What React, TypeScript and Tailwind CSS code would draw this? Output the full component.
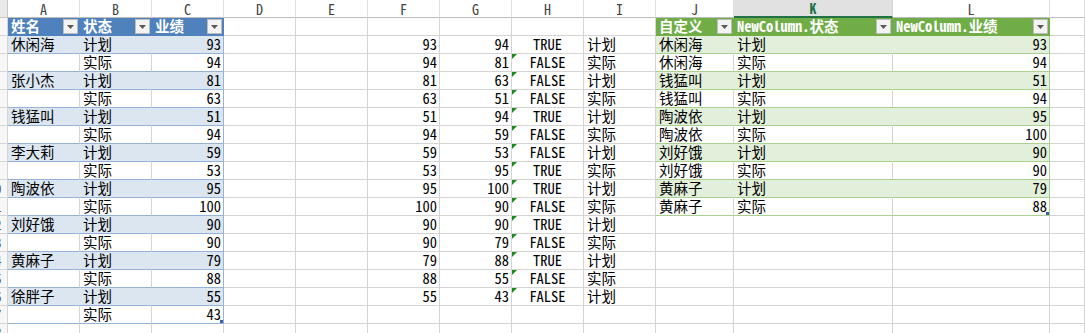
import React from 'react';
import clsx from 'clsx';

const FONT = "font-['Noto_Sans_Mono_CJK_SC','Noto_Sans_CJK_SC',monospace]";
const GRID = 'grid grid-cols-[8px_repeat(9,72px)_78px_159px_157px_1fr]';

const people = ['休闲海', '张小杰', '钱猛叫', '李大莉', '陶波依', '刘好饿', '黄麻子', '徐胖子'];
const scores = [93, 94, 81, 63, 51, 94, 59, 53, 95, 100, 90, 90, 79, 88, 55, 43];

const mid: [number, number, string, string][] = [
  [93, 94, 'TRUE', '计划'],
  [94, 81, 'FALSE', '实际'],
  [81, 63, 'FALSE', '计划'],
  [63, 51, 'FALSE', '实际'],
  [51, 94, 'TRUE', '计划'],
  [94, 59, 'FALSE', '实际'],
  [59, 53, 'FALSE', '计划'],
  [53, 95, 'TRUE', '实际'],
  [95, 100, 'TRUE', '计划'],
  [100, 90, 'FALSE', '实际'],
  [90, 90, 'TRUE', '计划'],
  [90, 79, 'FALSE', '实际'],
  [79, 88, 'TRUE', '计划'],
  [88, 55, 'FALSE', '实际'],
  [55, 43, 'FALSE', '计划'],
];

const merged: [string, string, number][] = [
  ['休闲海', '计划', 93],
  ['休闲海', '实际', 94],
  ['钱猛叫', '计划', 51],
  ['钱猛叫', '实际', 94],
  ['陶波依', '计划', 95],
  ['陶波依', '实际', 100],
  ['刘好饿', '计划', 90],
  ['刘好饿', '实际', 90],
  ['黄麻子', '计划', 79],
  ['黄麻子', '实际', 88],
];

// M is wider than what fits, its letter sits off screen
const letters = ['A', 'B', 'C', 'D', 'E', 'F', 'G', 'H', 'I', 'J', 'K', 'L', ''];

function Cell({ className, children }: { className?: string; children?: React.ReactNode }) {
  return (
    <div
      className={clsx(
        'relative flex items-center overflow-hidden whitespace-nowrap border-b border-r px-[3px] text-[14.5px] leading-none text-black',
        className ?? 'border-[#d4d4d4] bg-white'
      )}
    >
      {children}
    </div>
  );
}

function Dropdown() {
  return (
    <span className="ml-auto flex h-[15px] w-[15px] shrink-0 items-center justify-center border border-[#bcbcbc] bg-[#f3f3f3]">
      <svg width="7" height="4" viewBox="0 0 7 4">
        <path d="M0 0h7L3.5 4z" fill="#595959" />
      </svg>
    </span>
  );
}

function GreenTick() {
  return (
    <svg className="absolute left-0 top-0" width="5" height="5" viewBox="0 0 5 5">
      <path d="M0 0h5L0 5z" fill="#1a8a1a" />
    </svg>
  );
}

function Handle() {
  return <span className="absolute bottom-0 right-0 h-[3px] w-[3px] bg-[#3a5fb0]" />;
}

function RowHead({ n }: { n: number }) {
  return (
    <div className="relative overflow-hidden border-b border-r border-[#d4d4d4] bg-[#f7f7f7]">
      <span className="absolute left-[-20px] top-0 flex h-full w-[30px] items-center justify-center text-[13px] text-[#555]">
        {n}
      </span>
    </div>
  );
}

function blueCells(r: number) {
  const hdr = 'border-[#4f81bd] bg-[#4f81bd] pr-[1px] font-bold text-white';
  if (r === 1) {
    return [
      <Cell key="a" className={hdr}><span className="text-white">姓名</span><Dropdown /></Cell>,
      <Cell key="b" className={hdr}><span className="text-white">状态</span><Dropdown /></Cell>,
      <Cell key="c" className={hdr}><span className="text-white">业绩</span><Dropdown /></Cell>,
    ];
  }
  const i = r - 2;
  const band = i % 2 === 0;
  const inner = band
    ? 'border-b-[#95b3d7] border-r-[#dce6f1] bg-[#dce6f1]'
    : 'border-b-[#95b3d7] border-r-[#d4d4d4] bg-white';
  const last = band ? 'border-b-[#95b3d7] border-r-[#95b3d7] bg-[#dce6f1]' : 'border-b-[#95b3d7] border-r-[#95b3d7] bg-white';
  return [
    <Cell key="a" className={inner}>{band ? people[i / 2] : ''}</Cell>,
    <Cell key="b" className={inner}>{band ? '计划' : '实际'}</Cell>,
    <Cell key="c" className={clsx(last, 'justify-end pr-[2px]')}>
      {scores[i]}
      {r === 17 && <Handle />}
    </Cell>,
  ];
}

function greenCells(r: number) {
  const hdr = 'border-[#70ad47] bg-[#70ad47] pr-[1px] font-bold text-white';
  if (r === 1) {
    return [
      <Cell key="j" className={hdr}><span className="text-white">自定义</span><Dropdown /></Cell>,
      <Cell key="k" className={hdr}><span className="text-white">NewColumn.状态</span><Dropdown /></Cell>,
      <Cell key="l" className={hdr}><span className="text-white">NewColumn.业绩</span><Dropdown /></Cell>,
    ];
  }
  const k = r - 2;
  const band = k % 2 === 0;
  const inner = band
    ? 'border-b-[#a9d08e] border-r-[#e2efda] bg-[#e2efda]'
    : 'border-b-[#a9d08e] border-r-[#d4d4d4] bg-white';
  const last = band ? 'border-b-[#a9d08e] border-r-[#a9d08e] bg-[#e2efda]' : 'border-b-[#a9d08e] border-r-[#a9d08e] bg-white';
  const [n, s, v] = merged[k];
  return [
    <Cell key="j" className={inner}>{n}</Cell>,
    <Cell key="k" className={inner}>{s}</Cell>,
    <Cell key="l" className={clsx(last, 'justify-end pr-[2px]')}>
      {v}
      {r === 11 && <Handle />}
    </Cell>,
  ];
}

function midCells(r: number) {
  const row = r >= 2 && r <= 16 ? mid[r - 2] : null;
  return [
    <Cell key="f" className="justify-end border-[#d4d4d4] bg-white pr-[2px]">{row?.[0]}</Cell>,
    <Cell key="g" className="justify-end border-[#d4d4d4] bg-white pr-[2px]">{row?.[1]}</Cell>,
    <Cell key="h" className="justify-center border-[#d4d4d4] bg-white">
      {row && r > 2 && <GreenTick />}
      {row?.[2]}
    </Cell>,
    <Cell key="i" className="border-[#d4d4d4] bg-white">{row?.[3]}</Cell>,
  ];
}

export default function App() {
  const rows = Array.from({ length: 18 }, (_, i) => i + 1);
  return (
    <div className={clsx('h-[333px] w-[1085px] overflow-hidden bg-white', FONT)}>
      <div className={clsx(GRID, 'h-[18px]')}>
        <div className="border-b border-r border-[#c6c6c6] bg-[#e9e9e9]" />
        {letters.map((l, idx) =>
          l === 'K' ? (
            <div
              key={idx}
              className="flex items-center justify-center border-b-2 border-r border-b-[#217346] border-r-[#d4d4d4] bg-[#e1e1e1] text-[14px] font-bold leading-none text-[#217346]"
            >
              {l}
            </div>
          ) : (
            <div
              key={idx}
              className="flex items-center justify-center border-b border-r border-b-[#bdbdbd] border-r-[#e1e1e1] bg-white text-[14px] leading-none text-[#444]"
            >
              {l}
            </div>
          )
        )}
      </div>
      {rows.map((r) => (
        <div key={r} className={clsx(GRID, 'h-[18px]')}>
          <RowHead n={r} />
          {r <= 17 ? blueCells(r) : [<Cell key="a" />, <Cell key="b" />, <Cell key="c" />]}
          <Cell />
          <Cell />
          {midCells(r)}
          {r <= 11 ? greenCells(r) : [<Cell key="j" />, <Cell key="k" />, <Cell key="l" />]}
          <Cell />
        </div>
      ))}
    </div>
  );
}
